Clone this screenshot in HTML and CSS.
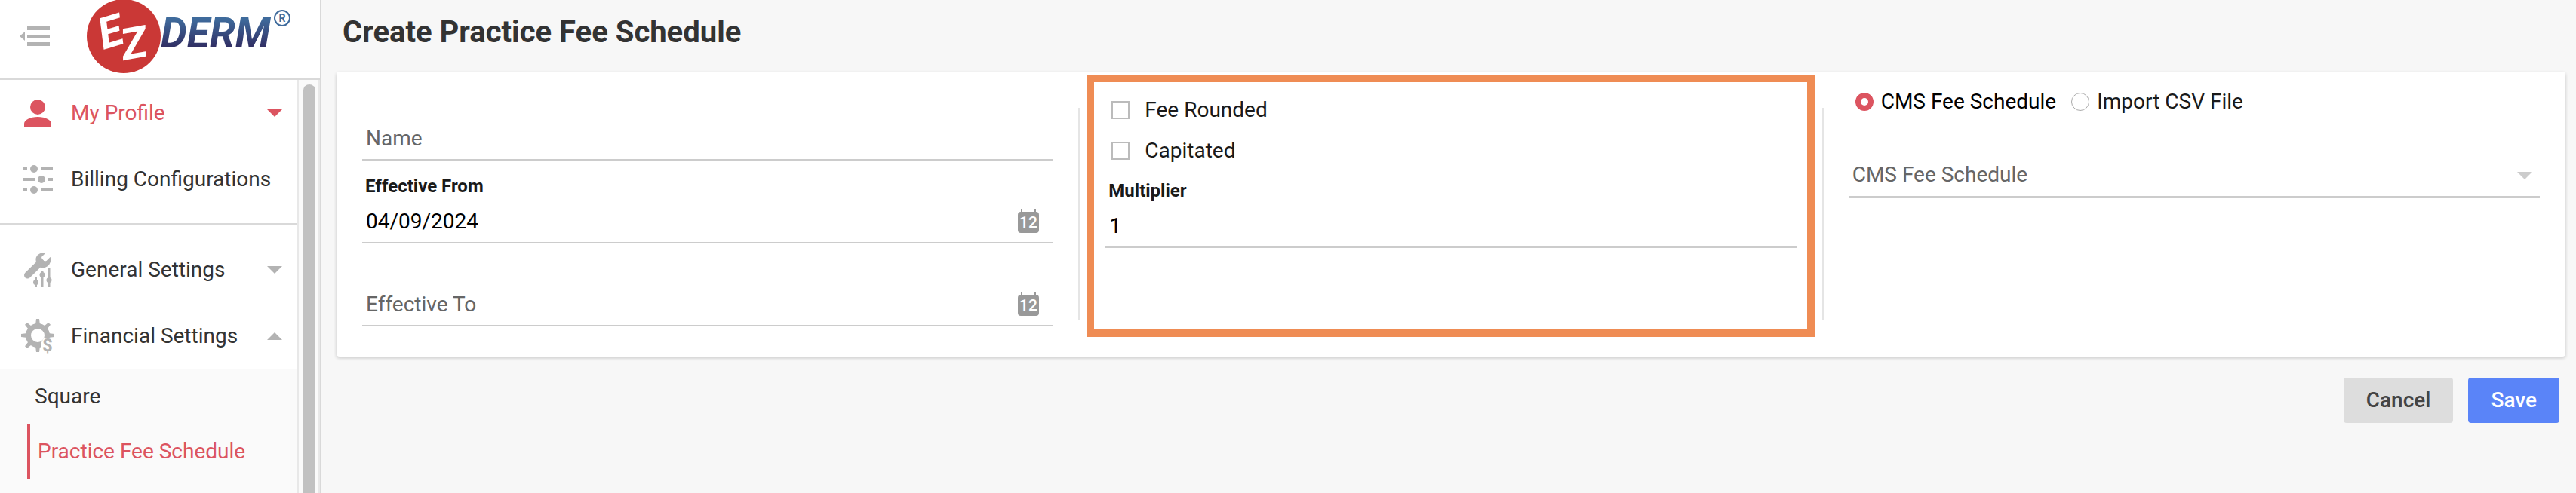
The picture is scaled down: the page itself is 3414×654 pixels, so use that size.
FILE: index.html
```html
<!DOCTYPE html>
<html lang="en">
<head>
  <meta charset="UTF-8">
  <title>Create Practice Fee Schedule</title>
  <link rel="stylesheet" href="styles.css">
</head>
<body>
  <aside class="sidebar">
    <div class="sidebar-header">
      <button class="menu-toggle" type="button" aria-label="Collapse menu">
        <svg width="40" height="26" viewBox="0 0 40 26">
          <path d="M0 13l7-6v12z"/>
          <path d="M10 0h30v5H10zM10 11h30v4H10zM10 21h30v5H10z"/>
        </svg>
      </button>
      <svg class="logo" width="270" height="104" viewBox="0 0 270 104" role="img" aria-label="EZDERM">
        <defs>
          <linearGradient id="ink" x1="0" y1="0" x2="0" y2="1">
            <stop offset="0.2" stop-color="#3f6b9c"/>
            <stop offset="0.8" stop-color="#302d62"/>
          </linearGradient>
        </defs>
        <circle cx="49" cy="48" r="49" fill="#ca3836"/>
        <text class="logo-ez" x="22" y="66" transform="rotate(-17 22 66)">E</text>
        <text class="logo-ez" x="49" y="80" transform="rotate(-10 49 80)">Z</text>
        <text class="logo-derm" x="98" y="63" fill="url(#ink)">DERM</text>
        <circle cx="259" cy="24" r="10" fill="none" stroke="#3f6b9c" stroke-width="2"/>
        <text class="logo-reg" x="259" y="29">R</text>
      </svg>
    </div>
    <div class="sidebar-body">
      <nav class="nav">
        <div class="nav-group">
          <a class="nav-item active" href="#">
            <svg class="nav-icon" viewBox="0 0 44 46">
              <circle cx="22" cy="15" r="10"/>
              <path d="M4 41v-4c0-5 8-9 18-9s18 4 18 9v4z"/>
            </svg>
            <span>My Profile</span>
            <svg class="caret" viewBox="0 0 20 10"><path d="M0 0h20L10 10z"/></svg>
          </a>
          <a class="nav-item" href="#">
            <svg class="nav-icon" viewBox="0 0 44 46">
              <path d="M2 7h6v4H2zM26 7h16v4H26zM2 21h16v4H2zM36 21h6v4h-6zM2 35h6v4H2zM26 35h16v4H26z"/>
              <circle cx="17" cy="9" r="5"/>
              <circle cx="27" cy="23" r="5"/>
              <circle cx="17" cy="37" r="5"/>
            </svg>
            <span>Billing Configurations</span>
          </a>
        </div>
        <div class="nav-group">
          <a class="nav-item" href="#">
            <svg class="nav-icon" viewBox="0 0 44 46">
              <path d="M8.5 30L26 13" stroke="#b3b3b3" stroke-width="9" stroke-linecap="round"/>
              <path d="M32 1c-7-2-13 3-12.500 9l1 7 6 3c6 1 13-2 13-13l-1-1-5 5c-3 1-6-1-6.500-5z"/>
              <path d="M18 33h3v13h-3zM26.500 24h3v22h-3zM35.500 21h3v25h-3z"/>
              <circle cx="19.500" cy="39.500" r="3.500"/>
              <circle cx="28" cy="29.500" r="3.500"/>
              <circle cx="37" cy="36.500" r="3.500"/>
            </svg>
            <span>General Settings</span>
            <svg class="caret" viewBox="0 0 20 10"><path d="M0 0h20L10 10z"/></svg>
          </a>
          <a class="nav-item" href="#">
            <svg class="nav-icon" viewBox="0 0 44 46">
              <g id="teeth">
                <path d="M19 8l1-8h4l1 8zM19 36l1 8h4l1-8z"/>
                <path d="M8 19l-8 1v4l8 1zM36 19l8 1v4l-8 1z"/>
              </g>
              <use href="#teeth" transform="rotate(45 22 22)"/>
              <circle cx="22" cy="22" r="12.500" fill="none" stroke="#b3b3b3" stroke-width="7"/>
              <path d="M27 46V31l3-6h14v21z" fill="#fff"/>
              <text class="dollar" x="35" y="43">$</text>
            </svg>
            <span>Financial Settings</span>
            <svg class="caret" viewBox="0 0 20 10"><path d="M0 10h20L10 0z"/></svg>
          </a>
        </div>
        <div class="submenu">
          <a class="submenu-item" href="#">Square</a>
          <a class="submenu-item active" href="#">Practice Fee Schedule</a>
        </div>
      </nav>
      <div class="scrollbar"><div class="scrollbar-thumb"></div></div>
    </div>
  </aside>

  <main class="content">
    <h1 class="page-title">Create Practice Fee Schedule</h1>
    <form>
      <div class="card">
        <div class="column">
          <div class="field">
            <input type="text" id="name" placeholder="Name" aria-label="Name">
          </div>
          <div class="field">
            <label for="from">Effective From</label>
            <input type="text" id="from" value="04/09/2024">
            <svg class="calendar" viewBox="0 0 28 32">
              <path d="M4 0h2v4h16V0h2v4q4 0 4 4v20q0 4-4 4H4q-4 0-4-4V8q0-4 4-4z"/>
              <text x="14" y="25">12</text>
            </svg>
          </div>
          <div class="field">
            <input type="text" id="to" placeholder="Effective To" aria-label="Effective To">
            <svg class="calendar" viewBox="0 0 28 32">
              <path d="M4 0h2v4h16V0h2v4q4 0 4 4v20q0 4-4 4H4q-4 0-4-4V8q0-4 4-4z"/>
              <text x="14" y="25">12</text>
            </svg>
          </div>
        </div>

        <div class="separator"></div>

        <div class="column highlighted">
          <div class="checks">
            <label class="check"><input type="checkbox"> Fee Rounded</label>
            <label class="check"><input type="checkbox"> Capitated</label>
          </div>
          <div class="field">
            <label for="multiplier">Multiplier</label>
            <input type="text" id="multiplier" value="1">
          </div>
        </div>

        <div class="separator"></div>

        <div class="column">
          <div class="radios">
            <label class="radio selected"><input type="radio" name="source" checked> CMS Fee Schedule</label>
            <label class="radio"><input type="radio" name="source"> Import CSV File</label>
          </div>
          <div class="field">
            <select id="schedule" aria-label="CMS Fee Schedule">
              <option>CMS Fee Schedule</option>
            </select>
            <svg class="select-caret" viewBox="0 0 20 10"><path d="M0 0h20L10 10z"/></svg>
          </div>
        </div>
      </div>

      <div class="actions">
        <button class="btn" type="button">Cancel</button>
        <button class="btn btn-primary" type="submit">Save</button>
      </div>
    </form>
  </main>
</body>
</html>
```

FILE: styles.css
```css
* {
  box-sizing: border-box;
}
body {
  margin: 0;
  display: flex;
  min-height: 100vh;
  background: #f7f7f7;
  color: #1a1a1a;
  font-family: Roboto, "Liberation Sans", sans-serif;
  font-size: 28px;
  line-height: 32px;
}
input, select, button {
  font: inherit;
}

/* Sidebar */
.sidebar {
  display: flex;
  flex-direction: column;
  flex: none;
  width: 426px;
  background: #fff;
  border-right: 2px solid #d9d9d9;
}
.sidebar-header {
  display: flex;
  align-items: center;
  gap: 49px;
  padding-left: 26px;
  border-bottom: 2px solid #d9d9d9;
}
.menu-toggle {
  display: flex;
  margin-bottom: 8px;
  padding: 0;
  background: none;
  border: none;
  fill: #b3b3b3;
  cursor: pointer;
}
.logo {
  display: block;
}
.logo-ez {
  fill: #fff;
  font-size: 58px;
  font-style: italic;
  font-weight: bold;
}
.logo-derm {
  font-size: 55px;
  font-style: italic;
  font-weight: bold;
}
.logo-reg {
  fill: #3f6b9c;
  font-size: 14px;
  font-weight: bold;
  text-anchor: middle;
}
.sidebar-body {
  display: flex;
  flex: 1;
}
.nav {
  flex: 1;
  display: flex;
  flex-direction: column;
}
.nav-group + .nav-group {
  margin-top: 14px;
  padding-top: 16px;
  border-top: 2px solid #d9d9d9;
}
.nav-item {
  display: flex;
  align-items: center;
  height: 88px;
  padding: 0 20px 0 28px;
  gap: 22px;
  color: #333;
  fill: #b3b3b3;
  text-decoration: none;
}
.nav-item.active {
  color: #dc5460;
  fill: #dc5460;
}
.nav-icon {
  width: 44px;
  height: 46px;
  overflow: visible;
}
.dollar {
  font-size: 24px;
  font-weight: bold;
  text-anchor: middle;
}
.caret {
  width: 20px;
  height: 10px;
  margin-left: auto;
}
.submenu {
  flex: 1;
  padding-left: 36px;
  background: #fafafa;
}
.submenu-item {
  display: block;
  padding: 20px 10px 21px;
  color: #333;
  text-decoration: none;
}
.submenu-item.active {
  color: #dc5460;
  border-left: 4px solid #dc5460;
}
.scrollbar {
  display: flex;
  width: 30px;
  padding: 6px 4px 0 6px;
  background: #fafafa;
  border-left: 2px solid #e8e8e8;
  border-right: 2px solid #e8e8e8;
}
.scrollbar-thumb {
  width: 16px;
  background: #c1c1c1;
  border-radius: 8px 8px 0 0;
}

/* Page content */
.content {
  flex: 1;
  padding: 0 14px 0 20px;
}
.page-title {
  margin: 0;
  padding: 19px 8px 28px;
  color: #333;
  font-size: 40px;
  font-weight: bold;
  line-height: 48px;
}
.card {
  display: grid;
  grid-template-columns: 1fr 2px 1fr 2px 1fr;
  gap: 34px;
  padding: 8px 34px 40px;
  background: #fff;
  border-radius: 4px;
  box-shadow: 0 2px 4px rgba(0,0,0,0.2);
}
.column {
  position: relative;
}
.separator {
  margin: 40px 0 8px;
  background: #e5e5e5;
}
/* Frame drawn around the middle column, over the card */
.highlighted::after {
  content: "";
  position: absolute;
  inset: -4px -24px -14px -25px;
  border: 10px solid #ef8c54;
  pointer-events: none;
}

.field {
  position: relative;
  display: flex;
  flex-direction: column;
  justify-content: flex-end;
  height: 110px;
}
.field label {
  margin-bottom: 4px;
  padding-left: 4px;
  font-size: 24px;
  font-weight: bold;
  line-height: 28px;
}
.field input, .field select {
  width: 100%;
  height: 58px;
  padding: 0 5px;
  background: none;
  border: none;
  border-bottom: 2px solid #ccc;
  border-radius: 0;
  outline: none;
  color: #000;
}
.field input::placeholder {
  color: #666;
  opacity: 1;
}
.field select {
  appearance: none;
  padding: 0 4px;
  color: #666;
}
.calendar {
  position: absolute;
  right: 18px;
  bottom: 14px;
  width: 28px;
  height: 32px;
  fill: #999;
}
.calendar text {
  fill: #fff;
  font-size: 21px;
  font-weight: 500;
  text-anchor: middle;
}
.select-caret {
  position: absolute;
  right: 10px;
  bottom: 24px;
  width: 20px;
  height: 10px;
  fill: #ccc;
}

.checks {
  display: flex;
  flex-direction: column;
  gap: 22px;
  padding: 27px 8px 3px;
}
.check {
  display: flex;
  align-items: center;
  gap: 20px;
}
.check input, .radio input {
  appearance: none;
  width: 24px;
  height: 24px;
  margin: 0;
  background: #fff;
  border: 2px solid #bbb;
}
.radios {
  display: flex;
  gap: 20px;
  padding: 16px 8px 1px;
}
.radio {
  display: flex;
  align-items: center;
  gap: 10px;
}
.radio.selected {
  color: #000;
}
.radio input {
  border-color: #aaa;
  border-width: 1px;
  border-radius: 50%;
}
.radio input:checked {
  border: 7px solid #dc5460;
}

.actions {
  display: flex;
  justify-content: flex-end;
  gap: 20px;
  padding: 28px 8px;
}
.btn {
  height: 60px;
  padding: 0 30px;
  background: #ddd;
  border: none;
  border-radius: 4px;
  color: #444;
  font-weight: 500;
  cursor: pointer;
}
.btn-primary {
  background: #5a84f8;
  color: #fff;
}
```
